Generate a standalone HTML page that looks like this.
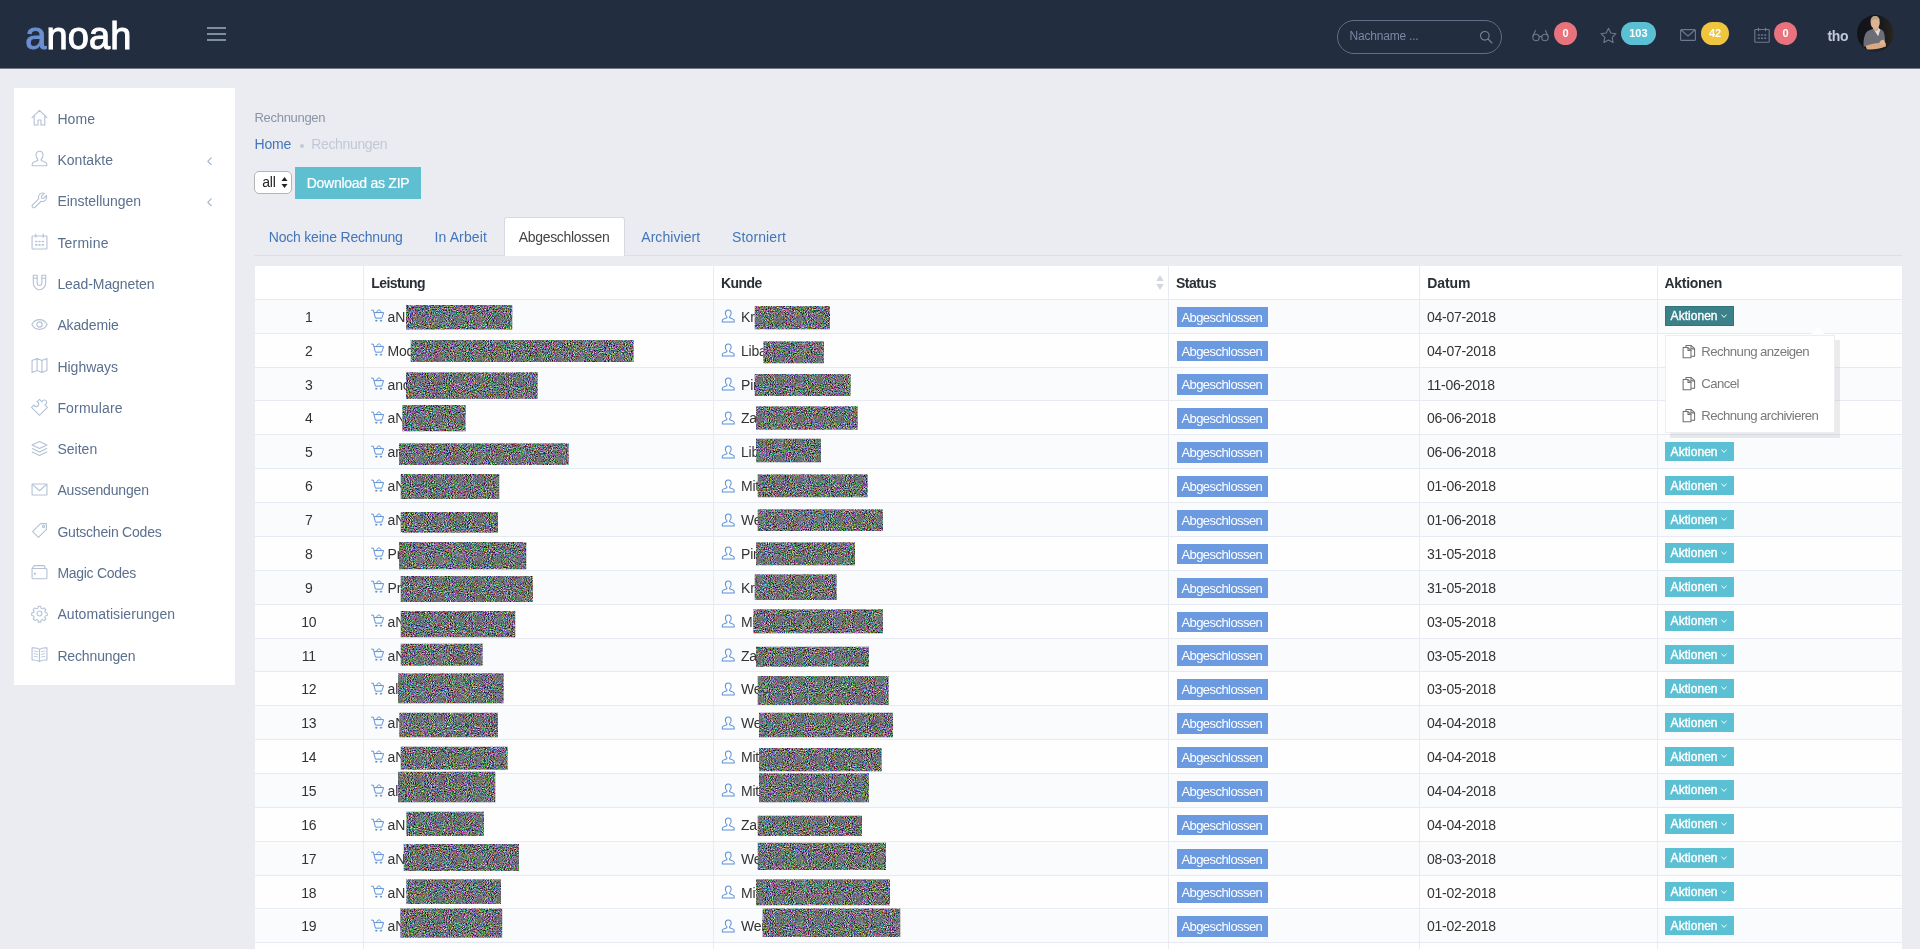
<!DOCTYPE html><html lang="de"><head><meta charset="utf-8"><title>Rechnungen</title><style>
*{box-sizing:border-box;margin:0;padding:0}
html,body{width:1920px;height:949px;overflow:hidden;background:#eaecf1;}
body{position:relative;font-family:"Liberation Sans",sans-serif;font-size:14px;color:#333;letter-spacing:-0.2px}
#root{position:absolute;left:0;top:0;width:1920px;height:949px;overflow:hidden;will-change:transform;transform:translateZ(0)}
.abs{position:absolute;white-space:nowrap}
#hdr{position:absolute;left:0;top:0;width:1920px;height:68px;background:#222d3f}
#hdr2{position:absolute;left:0;top:68px;width:1920px;height:1px;background:#727986}
#logo{position:absolute;left:25.3px;top:14.2px;font-size:38px;line-height:44px;color:#fff;letter-spacing:0.1px;-webkit-text-stroke:1px #fff}
#logo b{font-weight:normal;color:#6b8fd0;-webkit-text-stroke:1px #6b8fd0}
.bar{position:absolute;left:207px;width:19px;height:2px;background:#7f8da3}
#search{position:absolute;left:1336.5px;top:20px;width:165px;height:33.5px;border:1px solid #616d89;border-radius:17px}
#search span{position:absolute;left:12px;top:0;line-height:30px;font-size:12px;color:#7b86a4;letter-spacing:-0.2px}
.hb{position:absolute;top:22.1px;height:23.3px;border-radius:12px;color:#fff;font-size:11px;font-weight:bold;text-align:center;line-height:23px;letter-spacing:0}
#side{position:absolute;left:14px;top:88px;width:221.3px;height:597.3px;background:#fff}
.si{position:absolute;left:58px;height:20px;line-height:20px;font-size:14px;color:#5a708e;white-space:nowrap}
.sic{position:absolute;left:31px;width:17px;height:17px}
.sic svg{width:17px;height:17px;display:block;overflow:visible}
.sarr{position:absolute;left:206px;width:7px;height:8.6px}
.lnk{color:#4275ba}
#tabline{position:absolute;left:254px;top:254.7px;width:1648px;height:1px;background:#dcdfe6}
#tabact{position:absolute;left:503.8px;top:217px;width:121.2px;height:38.7px;background:#fff;border:1px solid #d6d9e0;border-bottom:none;border-radius:3px 3px 0 0}
.tab{position:absolute;top:227px;line-height:20px;font-size:14px;white-space:nowrap}
#tbl{position:absolute;left:254.5px;top:265.75px;width:1647.7px;height:700px;background:#fff}
.row{position:absolute;left:0;width:1647.7px;border-bottom:1px solid #e7ebf1}
.vl{position:absolute;top:0;width:1px;height:700px;background:#e8ebf1}
.th{position:absolute;top:0;height:33.5px;line-height:34.5px;font-weight:bold;font-size:14px;color:#2b2f36;letter-spacing:-0.55px;white-space:nowrap}
.c{position:absolute;white-space:nowrap;line-height:20px;font-size:14px;color:#333}
.badge{position:absolute;left:922.2px;width:91.3px;height:20.7px;background:#6c9ae0;color:#fff;font-size:13px;line-height:21.2px;text-align:center;letter-spacing:-0.56px;padding-right:1px}
.btn{position:absolute;left:1410.5px;width:68.7px;height:19.4px;background:#5bc0d3;color:#fff;font-size:12px;line-height:20.4px;padding-left:5.6px;letter-spacing:0.03px;-webkit-text-stroke:0.35px #fff;white-space:nowrap}
.btn.on{background:#3b8189;box-shadow:inset 0 0 0 1px #34747c}
.btn svg{position:absolute;left:56.3px;top:7.6px;width:6px;height:4.6px}
.ico{position:absolute}
#menu{position:absolute;left:1664.8px;top:334.6px;width:169.8px;height:98px;background:#fff;border:1px solid #eceef1;box-shadow:5px 5px rgba(102,102,102,0.12)}
.mi{position:absolute;left:35.5px;font-size:13.2px;color:#7a7a7a;line-height:20px;white-space:nowrap;letter-spacing:-0.56px;font-weight:normal}
.mic{position:absolute;left:16.6px;width:14px;height:15px}
</style></head><body><div id="root">
<div id="hdr2"></div><div id="hdr">
<div id="logo"><b>a</b>noah</div>
<div class="bar" style="top:27.2px"></div>
<div class="bar" style="top:32.9px"></div>
<div class="bar" style="top:38.6px"></div>
<div id="search"><span>Nachname ...</span><svg style="position:absolute;left:141.5px;top:9px;width:14px;height:14px" viewBox="0 0 14 14" fill="none" stroke="#76829f" stroke-width="1.100"><circle cx="5.800" cy="5.800" r="4.300"/><path d="M9 9l4 4" stroke-linecap="round"/></svg></div>
<svg class="abs" style="left:1532px;top:27px;width:17px;height:16px" viewBox="0 0 17 16" fill="none" stroke="#6c7991" stroke-width="1.100" stroke-linecap="round"><circle cx="4" cy="10.500" r="3.200"/><circle cx="13" cy="10.500" r="3.200"/><path d="M7.200 10c.8-.8 1.800-.8 2.600 0M1 9 3.500 3.500M16 9l-2.500-5.500"/></svg>
<svg class="abs" style="left:1600px;top:26.500px;width:17px;height:17px" viewBox="0 0 17 17" fill="none" stroke="#6c7991" stroke-width="1.100" stroke-linejoin="round"><path d="M8.500 1.200l2.300 4.800 5.200.7-3.800 3.600.9 5.200-4.600-2.500-4.600 2.500.9-5.200L1 6.700 6.200 6z"/></svg>
<svg class="abs" style="left:1679.500px;top:28.500px;width:16px;height:12px" viewBox="0 0 16 12" fill="none" stroke="#6c7991" stroke-width="1.100" stroke-linejoin="round"><rect x=".6" y=".6" width="14.800" height="10.800" rx="1"/><path d="M1 1l7 6 7-6"/></svg>
<svg class="abs" style="left:1753.500px;top:27px;width:16px;height:16px" viewBox="0 0 16 16" fill="none" stroke="#6c7991" stroke-width="1.100" stroke-linecap="round"><rect x=".8" y="2.500" width="14.400" height="12.700" rx=".8"/><path d="M4.500 1v2.800M11.500 1v2.800"/><path d="M4.300 8h1M7.500 8h1M10.700 8h1M4.300 11.300h1M7.500 11.300h1M10.700 11.300h1" stroke-width="1.400"/></svg>
<div class="hb" style="left:1553.800px;width:23.300px;background:#e8737c">0</div>
<div class="hb" style="left:1620.600px;width:35.600px;background:#5bc0d3">103</div>
<div class="hb" style="left:1700.700px;width:28.700px;background:#eec53d">42</div>
<div class="hb" style="left:1774px;width:23.300px;background:#e8737c">0</div>
<div class="abs" style="left:1827.5px;top:25.7px;line-height:20px;font-size:14px;font-weight:bold;color:#c3c9da;letter-spacing:-0.3px">tho</div>
<svg class="abs" style="left:1857.200px;top:15px;width:36.600px;height:36.600px" viewBox="0 0 36 36"><defs><clipPath id="av"><circle cx="18" cy="18" r="18"/></clipPath><linearGradient id="avg" x1="0" y1="0" x2="1" y2="0"><stop offset="0" stop-color="#111317"/><stop offset=".6" stop-color="#17171a"/><stop offset="1" stop-color="#2a261f"/></linearGradient></defs><g clip-path="url(#av)"><rect width="36" height="36" fill="url(#avg)"/><rect y="33.500" width="36" height="3" fill="#1c2535"/><path d="M6.500 31C6 24 7.500 17.500 11 15.500l5-2 7 .3c2.500.8 3.800 3.200 4.200 6.500l.8 10.700z" fill="#6d6d78"/><path d="M16.300 12.500h5.200l1.300 2.300-2 6.200-3.500-5.500z" fill="#e3ddd6"/><path d="M15.800 10h5.300v4.500l-1.800 1.500-3.500-2z" fill="#d1a584"/><ellipse cx="17.900" cy="7.300" rx="4.500" ry="6.300" fill="#dcb494"/><path d="M13.400 6.500C13.300 2.500 15.500.8 18 .9c2.400.1 4.300 1.600 4.400 4.600-1.500-1.700-6.500-2-9 1z" fill="#b9a486"/><path d="M8.500 30.500c4-2 12-3.500 19.500-3.200l.6 3.500c-6 2.500-14 3.700-19 3z" fill="#d8a982"/><path d="M22 27c1-2 3-3 4.500-2.500l1.500 4-4 1z" fill="#e0b790"/></g></svg>
</div>
<div id="side">
<div class="sic" style="left:17px;top:21.10px"><svg viewBox="0 0 16 16" fill="none" stroke="#b4c2d5" stroke-width="1.05" stroke-linecap="round" stroke-linejoin="round" ><path d="M1 8.2 8 1.2l7 7M3 6.6V15h3.6v-4.6h2.8V15H13V6.6"/></svg></div>
<div class="si" style="left:43.4px;top:20.70px;letter-spacing:0.07px">Home</div>
<div class="sic" style="left:17px;top:62.40px"><svg viewBox="0 0 16 16" fill="none" stroke="#b4c2d5" stroke-width="1.05" stroke-linecap="round" stroke-linejoin="round" ><path d="M8 1.2c2 0 3.3 1.5 3.3 3.7 0 1.6-.7 3-1.7 3.8v1.2l4 1.7c.7.3 1.2 1 1.2 1.800v1.4H1.200v-1.400c0-.8.500-1.500 1.200-1.800l4-1.700V8.700C5.400 7.900 4.700 6.500 4.700 4.900 4.700 2.700 6 1.200 8 1.200z"/></svg></div>
<div class="si" style="left:43.4px;top:62.00px;letter-spacing:0.04px">Kontakte</div>
<svg class="sarr" style="left:191.6px;top:68.50px" viewBox="0 0 8 10" fill="none" stroke="#a3b2c7" stroke-width="1.300" stroke-linecap="round" stroke-linejoin="round"><path d="M6 1 2 5l4 4"/></svg>
<div class="sic" style="left:17px;top:103.70px"><svg viewBox="0 0 16 16" fill="none" stroke="#b4c2d5" stroke-width="1.05" stroke-linecap="round" stroke-linejoin="round" ><path d="M14.600 3.300 12 5.900l-2-.1-.1-2 2.600-2.600c-1.600-.5-3.300-.100-4.400 1.100-1.100 1.100-1.400 2.700-.900 4.100L1.500 12.200c-.6.600-.6 1.600 0 2.200s1.600.6 2.200 0l5.800-5.700c1.400.500 3 .2 4.100-.9 1.200-1.200 1.500-2.900 1-4.500z"/></svg></div>
<div class="si" style="left:43.4px;top:103.30px;letter-spacing:-0.04px">Einstellungen</div>
<svg class="sarr" style="left:191.6px;top:109.80px" viewBox="0 0 8 10" fill="none" stroke="#a3b2c7" stroke-width="1.300" stroke-linecap="round" stroke-linejoin="round"><path d="M6 1 2 5l4 4"/></svg>
<div class="sic" style="left:17px;top:145.00px"><svg viewBox="0 0 16 16" fill="none" stroke="#b4c2d5" stroke-width="1.05" stroke-linecap="round" stroke-linejoin="round" ><rect x="1" y="2.800" width="14" height="12.200" rx=".6"/><path d="M4.500 1v3M11.500 1v3"/><path d="M4.500 8h.9M7.600 8h.9M10.700 8h.9M4.500 11.200h.9M7.600 11.200h.9M10.700 11.200h.9" stroke-width="1.500"/></svg></div>
<div class="si" style="left:43.4px;top:144.60px;letter-spacing:0.21px">Termine</div>
<div class="sic" style="left:17px;top:186.30px"><svg viewBox="0 0 16 16" fill="none" stroke="#b4c2d5" stroke-width="1.05" stroke-linecap="round" stroke-linejoin="round" ><path d="M2.200 1.200h3.600v7.300c0 1.300 1 2.300 2.200 2.300s2.200-1 2.200-2.300V1.200h3.600v7.300c0 3.300-2.600 6.300-5.800 6.300s-5.800-3-5.800-6.300z"/><path d="M2.200 4h3.600M10.200 4h3.600"/></svg></div>
<div class="si" style="left:43.4px;top:185.90px;letter-spacing:-0.08px">Lead-Magneten</div>
<div class="sic" style="left:17px;top:227.60px"><svg viewBox="0 0 16 16" fill="none" stroke="#b4c2d5" stroke-width="1.05" stroke-linecap="round" stroke-linejoin="round" ><path d="M.8 8C2.300 5.200 5 3.400 8 3.400s5.700 1.800 7.200 4.600C13.700 10.800 11 12.600 8 12.600S2.300 10.800.8 8z"/><circle cx="8" cy="8" r="2.500"/></svg></div>
<div class="si" style="left:43.4px;top:227.20px;letter-spacing:-0.13px">Akademie</div>
<div class="sic" style="left:17px;top:268.90px"><svg viewBox="0 0 16 16" fill="none" stroke="#b4c2d5" stroke-width="1.05" stroke-linecap="round" stroke-linejoin="round" ><path d="M1 3.200 5.700 1.400l4.600 1.800L15 1.400v11.400l-4.700 1.800-4.600-1.800L1 14.600zM5.700 1.400v11.400M10.300 3.200v11.400"/></svg></div>
<div class="si" style="left:43.4px;top:268.50px;letter-spacing:0.0px">Highways</div>
<div class="sic" style="left:17px;top:310.20px"><svg viewBox="0 0 16 16" fill="none" stroke="#b4c2d5" stroke-width="1.05" stroke-linecap="round" stroke-linejoin="round" ><g transform="translate(0 .4) scale(.96)"><path d="M.5 8.700 2.950 6.250A2.380 2.380 0 1 0 5.850 3.350L8.300.9 10.750 3.350A2.380 2.380 0 1 1 13.650 6.250L16.100 8.700 8.300 16.500z"/></g></svg></div>
<div class="si" style="left:43.4px;top:309.80px;letter-spacing:0.17px">Formulare</div>
<div class="sic" style="left:17px;top:351.50px"><svg viewBox="0 0 16 16" fill="none" stroke="#b4c2d5" stroke-width="1.05" stroke-linecap="round" stroke-linejoin="round" ><path d="M8 1.300 15 4.700 8 8.100 1 4.700zM1.200 8 8 11.300 14.800 8M1.200 11.200 8 14.500l6.800-3.300"/></svg></div>
<div class="si" style="left:43.4px;top:351.10px;letter-spacing:0.02px">Seiten</div>
<div class="sic" style="left:17px;top:392.80px"><svg viewBox="0 0 16 16" fill="none" stroke="#b4c2d5" stroke-width="1.05" stroke-linecap="round" stroke-linejoin="round" ><rect x="1" y="2.800" width="14" height="10.400" rx=".6"/><path d="M1.300 3.200 8 9.200l6.700-6"/></svg></div>
<div class="si" style="left:43.4px;top:392.40px;letter-spacing:-0.17px">Aussendungen</div>
<div class="sic" style="left:17px;top:434.10px"><svg viewBox="0 0 16 16" fill="none" stroke="#b4c2d5" stroke-width="1.05" stroke-linecap="round" stroke-linejoin="round" ><path d="M9 1.500h5.500V7L7 14.500 1.500 9z"/><circle cx="11.800" cy="4.200" r="1"/></svg></div>
<div class="si" style="left:43.4px;top:433.70px;letter-spacing:-0.22px">Gutschein Codes</div>
<div class="sic" style="left:17px;top:475.40px"><svg viewBox="0 0 16 16" fill="none" stroke="#b4c2d5" stroke-width="1.05" stroke-linecap="round" stroke-linejoin="round" ><path d="M1 5.200h13c.6 0 1 .4 1 1v7.600c0 .6-.4 1-1 1H2c-.6 0-1-.4-1-1zM1 5.200 3 2.500h9.500l1 2.700"/><circle cx="3.600" cy="10" r=".5"/></svg></div>
<div class="si" style="left:43.4px;top:475.00px;letter-spacing:-0.28px">Magic Codes</div>
<div class="sic" style="left:17px;top:516.70px"><svg viewBox="0 0 16 16" fill="none" stroke="#b4c2d5" stroke-width="1.05" stroke-linecap="round" stroke-linejoin="round" ><circle cx="8" cy="8" r="2.300"/><path d="M6.800 1h2.400l.4 1.900 1.300.6 1.700-1 1.600 1.700-1 1.600.5 1.300 1.900.5v2.300l-1.900.5-.5 1.300 1 1.600-1.600 1.700-1.700-1-1.300.5-.4 2H6.800l-.4-2-1.300-.5-1.700 1-1.600-1.700 1-1.600-.5-1.300L.4 9.900V7.600l1.900-.5.5-1.300-1-1.600 1.600-1.700 1.700 1 1.300-.6z" transform="translate(.3 .3) scale(.96)"/></svg></div>
<div class="si" style="left:43.4px;top:516.30px;letter-spacing:0.06px">Automatisierungen</div>
<div class="sic" style="left:17px;top:558.00px"><svg viewBox="0 0 16 16" fill="none" stroke="#b4c2d5" stroke-width="1.05" stroke-linecap="round" stroke-linejoin="round" ><path d="M8 3.200C6.500 2 4 1.600 1 1.800v11.400c3-.2 5.500.2 7 1.400 1.500-1.200 4-1.600 7-1.400V1.800C12 1.600 9.500 2 8 3.200zM8 3.200v11.400"/><path d="M3 4.800c1.200 0 2.300.2 3.200.6M3 7.300c1.200 0 2.300.2 3.200.6M3 9.800c1.200 0 2.300.2 3.200.6M13 4.800c-1.200 0-2.300.2-3.200.6M13 7.300c-1.200 0-2.300.2-3.200.6M13 9.800c-1.200 0-2.300.2-3.200.6" stroke-width=".8"/></svg></div>
<div class="si" style="left:43.4px;top:557.60px;letter-spacing:-0.14px">Rechnungen</div>
</div>
<div class="abs" style="left:254.500px;top:109.400px;line-height:18px;font-size:13px;color:#8a95a6;letter-spacing:-0.3px">Rechnungen</div>
<div class="abs lnk" style="left:254.500px;top:133.800px;line-height:20px;font-size:14px">Home</div>
<div class="abs" style="left:300px;top:144px;width:4px;height:4px;border-radius:2px;background:#c3cbd9"></div>
<div class="abs" style="left:311.200px;top:133.800px;line-height:20px;font-size:14px;letter-spacing:-0.34px;color:#c1c9d7">Rechnungen</div>
<div class="abs" style="left:254.250px;top:171.250px;width:37.250px;height:22.250px;background:#fff;border:1px solid #b4b4b4;border-radius:5px"><span style="position:absolute;left:7px;top:0;line-height:21.500px;font-size:14px;color:#222">all</span><svg style="position:absolute;left:25.500px;top:4.500px;width:7px;height:11px" viewBox="0 0 7 11" fill="#222"><path d="M3.500 0 6.500 4h-6zM3.500 11 .5 7h6z"/></svg></div>
<div class="abs" style="left:295.250px;top:167.250px;width:125.600px;height:31.750px;background:#5dbfd0;color:#fff;font-size:14px;line-height:33px;text-align:center;letter-spacing:-0.27px;-webkit-text-stroke:0.2px #fff">Download as ZIP</div>
<div id="tabline"></div><div id="tabact"></div>
<div class="tab lnk" style="left:268.75px;letter-spacing:-0.2px">Noch keine Rechnung</div>
<div class="tab lnk" style="left:434.5px;letter-spacing:0.12px">In Arbeit</div>
<div class="tab" style="left:518.75px;color:#444;letter-spacing:-0.33px">Abgeschlossen</div>
<div class="tab lnk" style="left:641.25px;letter-spacing:0.06px">Archiviert</div>
<div class="tab lnk" style="left:732.1px;letter-spacing:0.1px">Storniert</div>
<div id="tbl">
<div class="row" style="top:0;height:34.1px;background:#fff"></div>
<div class="row" style="top:34.10px;height:33.87px;background:#fafbfd"></div>
<div class="row" style="top:67.97px;height:33.87px;background:#fefefe"></div>
<div class="row" style="top:101.84px;height:33.87px;background:#fafbfd"></div>
<div class="row" style="top:135.71px;height:33.87px;background:#fefefe"></div>
<div class="row" style="top:169.58px;height:33.87px;background:#fafbfd"></div>
<div class="row" style="top:203.45px;height:33.87px;background:#fefefe"></div>
<div class="row" style="top:237.32px;height:33.87px;background:#fafbfd"></div>
<div class="row" style="top:271.19px;height:33.87px;background:#fefefe"></div>
<div class="row" style="top:305.06px;height:33.87px;background:#fafbfd"></div>
<div class="row" style="top:338.93px;height:33.87px;background:#fefefe"></div>
<div class="row" style="top:372.80px;height:33.87px;background:#fafbfd"></div>
<div class="row" style="top:406.67px;height:33.87px;background:#fefefe"></div>
<div class="row" style="top:440.54px;height:33.87px;background:#fafbfd"></div>
<div class="row" style="top:474.41px;height:33.87px;background:#fefefe"></div>
<div class="row" style="top:508.28px;height:33.87px;background:#fafbfd"></div>
<div class="row" style="top:542.15px;height:33.87px;background:#fefefe"></div>
<div class="row" style="top:576.02px;height:33.87px;background:#fafbfd"></div>
<div class="row" style="top:609.89px;height:33.87px;background:#fefefe"></div>
<div class="row" style="top:643.76px;height:33.87px;background:#fafbfd"></div>
<div class="row" style="top:677.63px;height:33.87px;background:#fefefe"></div>
<div class="vl" style="left:108.25px"></div>
<div class="vl" style="left:458.70px"></div>
<div class="vl" style="left:913.70px"></div>
<div class="vl" style="left:1164.30px"></div>
<div class="vl" style="left:1402.30px"></div>
<div class="th" style="left:116.70px;letter-spacing:-0.55px">Leistung</div>
<div class="th" style="left:466.40px;letter-spacing:-0.55px">Kunde</div>
<div class="th" style="left:921.40px;letter-spacing:-0.45px">Status</div>
<div class="th" style="left:1172.80px;letter-spacing:-0.08px">Datum</div>
<div class="th" style="left:1410.00px;letter-spacing:-0.3px">Aktionen</div>
<svg class="abs" style="left:901.20px;top:9.25px;width:8px;height:15px" viewBox="0 0 8 15" fill="#d3d7de"><path d="M4 0 7.800 6H.2zM4 15 .2 9h7.600z"/></svg>
<div class="c" style="left:24.25px;width:60px;text-align:center;top:41.08px">1</div>
<svg class="ico" style="left:116.40px;top:43.73px;width:13.500px;height:13.500px" viewBox="0 0 14 14" fill="none" stroke="#5a8fd6" stroke-width="1" stroke-linecap="round" stroke-linejoin="round"><path d="M.6 1.200h1.800l2.200 8.300h6.600l1.900-5.800H3.600"/><path d="M6 3.600c0-1.700 1-2.600 2.200-2.600s2.200.9 2.200 2.600"/><circle cx="5.400" cy="12.100" r=".75" fill="#5a8fd6" stroke-width=".6"/><circle cx="10.300" cy="12.100" r=".75" fill="#5a8fd6" stroke-width=".6"/></svg>
<div class="c" style="left:133.05px;top:41.08px">aN</div>
<svg class="ico" style="left:466.60px;top:43.53px;width:14.500px;height:14px" viewBox="0 0 16 16" fill="none" stroke="#5a8fd6" stroke-width="1.150" stroke-linecap="round" stroke-linejoin="round"><path d="M8 1.2c2 0 3.3 1.5 3.3 3.7 0 1.6-.7 3-1.7 3.8v1.2l4 1.7c.7.3 1.2 1 1.2 1.800v1.4H1.200v-1.400c0-.8.500-1.500 1.200-1.800l4-1.700V8.700C5.400 7.900 4.700 6.500 4.700 4.900 4.700 2.700 6 1.200 8 1.200z"/></svg>
<div class="c" style="left:486.50px;top:41.08px">Kr</div>
<div class="badge" style="top:40.93px">Abgeschlossen</div>
<div class="c" style="left:1172.60px;top:41.08px;letter-spacing:-0.3px">04-07-2018</div>
<div class="btn on" style="top:40.53px">Aktionen<svg viewBox="0 0 7 5" fill="none" stroke="#fff" stroke-width="1.100" stroke-linecap="round" stroke-linejoin="round"><path d="M.8.800 3.500 3.800 6.200.8"/></svg></div>
<div class="c" style="left:24.25px;width:60px;text-align:center;top:74.95px">2</div>
<svg class="ico" style="left:116.40px;top:77.61px;width:13.500px;height:13.500px" viewBox="0 0 14 14" fill="none" stroke="#5a8fd6" stroke-width="1" stroke-linecap="round" stroke-linejoin="round"><path d="M.6 1.200h1.800l2.200 8.300h6.600l1.900-5.800H3.600"/><path d="M6 3.600c0-1.700 1-2.600 2.200-2.600s2.200.9 2.200 2.600"/><circle cx="5.400" cy="12.100" r=".75" fill="#5a8fd6" stroke-width=".6"/><circle cx="10.300" cy="12.100" r=".75" fill="#5a8fd6" stroke-width=".6"/></svg>
<div class="c" style="left:133.05px;top:74.95px">Mod</div>
<svg class="ico" style="left:466.60px;top:77.41px;width:14.500px;height:14px" viewBox="0 0 16 16" fill="none" stroke="#5a8fd6" stroke-width="1.150" stroke-linecap="round" stroke-linejoin="round"><path d="M8 1.2c2 0 3.3 1.5 3.3 3.7 0 1.6-.7 3-1.7 3.8v1.2l4 1.7c.7.3 1.2 1 1.2 1.800v1.4H1.200v-1.400c0-.8.500-1.500 1.200-1.800l4-1.700V8.700C5.400 7.900 4.700 6.500 4.700 4.900 4.700 2.700 6 1.200 8 1.200z"/></svg>
<div class="c" style="left:486.50px;top:74.95px">Liba</div>
<div class="badge" style="top:74.81px">Abgeschlossen</div>
<div class="c" style="left:1172.60px;top:74.95px;letter-spacing:-0.3px">04-07-2018</div>
<div class="c" style="left:24.25px;width:60px;text-align:center;top:108.83px">3</div>
<svg class="ico" style="left:116.40px;top:111.48px;width:13.500px;height:13.500px" viewBox="0 0 14 14" fill="none" stroke="#5a8fd6" stroke-width="1" stroke-linecap="round" stroke-linejoin="round"><path d="M.6 1.200h1.800l2.200 8.300h6.600l1.900-5.800H3.600"/><path d="M6 3.600c0-1.700 1-2.600 2.200-2.600s2.200.9 2.200 2.600"/><circle cx="5.400" cy="12.100" r=".75" fill="#5a8fd6" stroke-width=".6"/><circle cx="10.300" cy="12.100" r=".75" fill="#5a8fd6" stroke-width=".6"/></svg>
<div class="c" style="left:133.05px;top:108.83px">ano</div>
<svg class="ico" style="left:466.60px;top:111.28px;width:14.500px;height:14px" viewBox="0 0 16 16" fill="none" stroke="#5a8fd6" stroke-width="1.150" stroke-linecap="round" stroke-linejoin="round"><path d="M8 1.2c2 0 3.3 1.5 3.3 3.7 0 1.6-.7 3-1.7 3.8v1.2l4 1.7c.7.3 1.2 1 1.2 1.800v1.4H1.200v-1.400c0-.8.500-1.500 1.200-1.800l4-1.700V8.700C5.400 7.900 4.700 6.500 4.700 4.900 4.700 2.700 6 1.200 8 1.200z"/></svg>
<div class="c" style="left:486.50px;top:108.83px">Pin</div>
<div class="badge" style="top:108.68px">Abgeschlossen</div>
<div class="c" style="left:1172.60px;top:108.83px;letter-spacing:-0.3px">11-06-2018</div>
<div class="c" style="left:24.25px;width:60px;text-align:center;top:142.69px">4</div>
<svg class="ico" style="left:116.40px;top:145.34px;width:13.500px;height:13.500px" viewBox="0 0 14 14" fill="none" stroke="#5a8fd6" stroke-width="1" stroke-linecap="round" stroke-linejoin="round"><path d="M.6 1.200h1.800l2.200 8.300h6.600l1.900-5.800H3.600"/><path d="M6 3.600c0-1.700 1-2.600 2.200-2.600s2.200.9 2.200 2.600"/><circle cx="5.400" cy="12.100" r=".75" fill="#5a8fd6" stroke-width=".6"/><circle cx="10.300" cy="12.100" r=".75" fill="#5a8fd6" stroke-width=".6"/></svg>
<div class="c" style="left:133.05px;top:142.69px">aN</div>
<svg class="ico" style="left:466.60px;top:145.14px;width:14.500px;height:14px" viewBox="0 0 16 16" fill="none" stroke="#5a8fd6" stroke-width="1.150" stroke-linecap="round" stroke-linejoin="round"><path d="M8 1.2c2 0 3.3 1.5 3.3 3.7 0 1.6-.7 3-1.7 3.8v1.2l4 1.7c.7.3 1.2 1 1.2 1.800v1.4H1.200v-1.400c0-.8.500-1.500 1.200-1.800l4-1.700V8.700C5.400 7.900 4.700 6.500 4.700 4.900 4.700 2.700 6 1.200 8 1.200z"/></svg>
<div class="c" style="left:486.50px;top:142.69px">Za</div>
<div class="badge" style="top:142.54px">Abgeschlossen</div>
<div class="c" style="left:1172.60px;top:142.69px;letter-spacing:-0.3px">06-06-2018</div>
<div class="c" style="left:24.25px;width:60px;text-align:center;top:176.56px">5</div>
<svg class="ico" style="left:116.40px;top:179.21px;width:13.500px;height:13.500px" viewBox="0 0 14 14" fill="none" stroke="#5a8fd6" stroke-width="1" stroke-linecap="round" stroke-linejoin="round"><path d="M.6 1.200h1.800l2.200 8.300h6.600l1.900-5.800H3.600"/><path d="M6 3.600c0-1.700 1-2.600 2.200-2.600s2.200.9 2.200 2.600"/><circle cx="5.400" cy="12.100" r=".75" fill="#5a8fd6" stroke-width=".6"/><circle cx="10.300" cy="12.100" r=".75" fill="#5a8fd6" stroke-width=".6"/></svg>
<div class="c" style="left:133.05px;top:176.56px">an</div>
<svg class="ico" style="left:466.60px;top:179.01px;width:14.500px;height:14px" viewBox="0 0 16 16" fill="none" stroke="#5a8fd6" stroke-width="1.150" stroke-linecap="round" stroke-linejoin="round"><path d="M8 1.2c2 0 3.3 1.5 3.3 3.7 0 1.6-.7 3-1.7 3.8v1.2l4 1.7c.7.3 1.2 1 1.2 1.800v1.4H1.200v-1.400c0-.8.500-1.500 1.200-1.800l4-1.700V8.700C5.400 7.900 4.700 6.500 4.700 4.900 4.700 2.700 6 1.200 8 1.200z"/></svg>
<div class="c" style="left:486.50px;top:176.56px">Lib</div>
<div class="badge" style="top:176.41px">Abgeschlossen</div>
<div class="c" style="left:1172.60px;top:176.56px;letter-spacing:-0.3px">06-06-2018</div>
<div class="btn" style="top:176.01px">Aktionen<svg viewBox="0 0 7 5" fill="none" stroke="#fff" stroke-width="1.100" stroke-linecap="round" stroke-linejoin="round"><path d="M.8.800 3.500 3.800 6.200.8"/></svg></div>
<div class="c" style="left:24.25px;width:60px;text-align:center;top:210.44px">6</div>
<svg class="ico" style="left:116.40px;top:213.08px;width:13.500px;height:13.500px" viewBox="0 0 14 14" fill="none" stroke="#5a8fd6" stroke-width="1" stroke-linecap="round" stroke-linejoin="round"><path d="M.6 1.200h1.800l2.200 8.300h6.600l1.900-5.800H3.600"/><path d="M6 3.600c0-1.700 1-2.600 2.200-2.600s2.200.9 2.200 2.600"/><circle cx="5.400" cy="12.100" r=".75" fill="#5a8fd6" stroke-width=".6"/><circle cx="10.300" cy="12.100" r=".75" fill="#5a8fd6" stroke-width=".6"/></svg>
<div class="c" style="left:133.05px;top:210.44px">aN</div>
<svg class="ico" style="left:466.60px;top:212.88px;width:14.500px;height:14px" viewBox="0 0 16 16" fill="none" stroke="#5a8fd6" stroke-width="1.150" stroke-linecap="round" stroke-linejoin="round"><path d="M8 1.2c2 0 3.3 1.5 3.3 3.7 0 1.6-.7 3-1.7 3.8v1.2l4 1.7c.7.3 1.2 1 1.2 1.800v1.4H1.200v-1.400c0-.8.500-1.500 1.200-1.800l4-1.700V8.700C5.400 7.900 4.700 6.500 4.700 4.900 4.700 2.700 6 1.200 8 1.200z"/></svg>
<div class="c" style="left:486.50px;top:210.44px">Mit</div>
<div class="badge" style="top:210.28px">Abgeschlossen</div>
<div class="c" style="left:1172.60px;top:210.44px;letter-spacing:-0.3px">01-06-2018</div>
<div class="btn" style="top:209.88px">Aktionen<svg viewBox="0 0 7 5" fill="none" stroke="#fff" stroke-width="1.100" stroke-linecap="round" stroke-linejoin="round"><path d="M.8.800 3.500 3.800 6.200.8"/></svg></div>
<div class="c" style="left:24.25px;width:60px;text-align:center;top:244.30px">7</div>
<svg class="ico" style="left:116.40px;top:246.95px;width:13.500px;height:13.500px" viewBox="0 0 14 14" fill="none" stroke="#5a8fd6" stroke-width="1" stroke-linecap="round" stroke-linejoin="round"><path d="M.6 1.200h1.800l2.200 8.300h6.600l1.900-5.800H3.600"/><path d="M6 3.600c0-1.700 1-2.600 2.200-2.600s2.200.9 2.200 2.600"/><circle cx="5.400" cy="12.100" r=".75" fill="#5a8fd6" stroke-width=".6"/><circle cx="10.300" cy="12.100" r=".75" fill="#5a8fd6" stroke-width=".6"/></svg>
<div class="c" style="left:133.05px;top:244.30px">aN</div>
<svg class="ico" style="left:466.60px;top:246.75px;width:14.500px;height:14px" viewBox="0 0 16 16" fill="none" stroke="#5a8fd6" stroke-width="1.150" stroke-linecap="round" stroke-linejoin="round"><path d="M8 1.2c2 0 3.3 1.5 3.3 3.7 0 1.6-.7 3-1.7 3.8v1.2l4 1.7c.7.3 1.2 1 1.2 1.800v1.4H1.200v-1.400c0-.8.500-1.500 1.200-1.800l4-1.700V8.700C5.400 7.900 4.700 6.500 4.700 4.900 4.700 2.700 6 1.200 8 1.200z"/></svg>
<div class="c" style="left:486.50px;top:244.30px">We</div>
<div class="badge" style="top:244.15px">Abgeschlossen</div>
<div class="c" style="left:1172.60px;top:244.30px;letter-spacing:-0.3px">01-06-2018</div>
<div class="btn" style="top:243.75px">Aktionen<svg viewBox="0 0 7 5" fill="none" stroke="#fff" stroke-width="1.100" stroke-linecap="round" stroke-linejoin="round"><path d="M.8.800 3.500 3.800 6.200.8"/></svg></div>
<div class="c" style="left:24.25px;width:60px;text-align:center;top:278.18px">8</div>
<svg class="ico" style="left:116.40px;top:280.82px;width:13.500px;height:13.500px" viewBox="0 0 14 14" fill="none" stroke="#5a8fd6" stroke-width="1" stroke-linecap="round" stroke-linejoin="round"><path d="M.6 1.200h1.800l2.200 8.300h6.600l1.900-5.800H3.600"/><path d="M6 3.600c0-1.700 1-2.600 2.200-2.600s2.200.9 2.200 2.600"/><circle cx="5.400" cy="12.100" r=".75" fill="#5a8fd6" stroke-width=".6"/><circle cx="10.300" cy="12.100" r=".75" fill="#5a8fd6" stroke-width=".6"/></svg>
<div class="c" style="left:133.05px;top:278.18px">Pr</div>
<svg class="ico" style="left:466.60px;top:280.62px;width:14.500px;height:14px" viewBox="0 0 16 16" fill="none" stroke="#5a8fd6" stroke-width="1.150" stroke-linecap="round" stroke-linejoin="round"><path d="M8 1.2c2 0 3.3 1.5 3.3 3.7 0 1.6-.7 3-1.7 3.8v1.2l4 1.7c.7.3 1.2 1 1.2 1.800v1.4H1.200v-1.400c0-.8.500-1.500 1.200-1.800l4-1.700V8.700C5.400 7.900 4.700 6.500 4.700 4.900 4.700 2.700 6 1.200 8 1.200z"/></svg>
<div class="c" style="left:486.50px;top:278.18px">Pin</div>
<div class="badge" style="top:278.02px">Abgeschlossen</div>
<div class="c" style="left:1172.60px;top:278.18px;letter-spacing:-0.3px">31-05-2018</div>
<div class="btn" style="top:277.62px">Aktionen<svg viewBox="0 0 7 5" fill="none" stroke="#fff" stroke-width="1.100" stroke-linecap="round" stroke-linejoin="round"><path d="M.8.800 3.500 3.800 6.200.8"/></svg></div>
<div class="c" style="left:24.25px;width:60px;text-align:center;top:312.05px">9</div>
<svg class="ico" style="left:116.40px;top:314.69px;width:13.500px;height:13.500px" viewBox="0 0 14 14" fill="none" stroke="#5a8fd6" stroke-width="1" stroke-linecap="round" stroke-linejoin="round"><path d="M.6 1.200h1.800l2.200 8.300h6.600l1.900-5.800H3.600"/><path d="M6 3.600c0-1.700 1-2.600 2.200-2.600s2.200.9 2.200 2.600"/><circle cx="5.400" cy="12.100" r=".75" fill="#5a8fd6" stroke-width=".6"/><circle cx="10.300" cy="12.100" r=".75" fill="#5a8fd6" stroke-width=".6"/></svg>
<div class="c" style="left:133.05px;top:312.05px">Pr</div>
<svg class="ico" style="left:466.60px;top:314.50px;width:14.500px;height:14px" viewBox="0 0 16 16" fill="none" stroke="#5a8fd6" stroke-width="1.150" stroke-linecap="round" stroke-linejoin="round"><path d="M8 1.2c2 0 3.3 1.5 3.3 3.7 0 1.6-.7 3-1.7 3.8v1.2l4 1.7c.7.3 1.2 1 1.2 1.800v1.4H1.200v-1.400c0-.8.500-1.500 1.200-1.800l4-1.700V8.700C5.400 7.900 4.700 6.500 4.700 4.900 4.700 2.700 6 1.200 8 1.200z"/></svg>
<div class="c" style="left:486.50px;top:312.05px">Kr</div>
<div class="badge" style="top:311.89px">Abgeschlossen</div>
<div class="c" style="left:1172.60px;top:312.05px;letter-spacing:-0.3px">31-05-2018</div>
<div class="btn" style="top:311.50px">Aktionen<svg viewBox="0 0 7 5" fill="none" stroke="#fff" stroke-width="1.100" stroke-linecap="round" stroke-linejoin="round"><path d="M.8.800 3.500 3.800 6.200.8"/></svg></div>
<div class="c" style="left:24.25px;width:60px;text-align:center;top:345.92px">10</div>
<svg class="ico" style="left:116.40px;top:348.56px;width:13.500px;height:13.500px" viewBox="0 0 14 14" fill="none" stroke="#5a8fd6" stroke-width="1" stroke-linecap="round" stroke-linejoin="round"><path d="M.6 1.200h1.800l2.200 8.300h6.600l1.900-5.800H3.600"/><path d="M6 3.600c0-1.700 1-2.600 2.200-2.600s2.200.9 2.200 2.600"/><circle cx="5.400" cy="12.100" r=".75" fill="#5a8fd6" stroke-width=".6"/><circle cx="10.300" cy="12.100" r=".75" fill="#5a8fd6" stroke-width=".6"/></svg>
<div class="c" style="left:133.05px;top:345.92px">aN</div>
<svg class="ico" style="left:466.60px;top:348.37px;width:14.500px;height:14px" viewBox="0 0 16 16" fill="none" stroke="#5a8fd6" stroke-width="1.150" stroke-linecap="round" stroke-linejoin="round"><path d="M8 1.2c2 0 3.3 1.5 3.3 3.7 0 1.6-.7 3-1.7 3.8v1.2l4 1.7c.7.3 1.2 1 1.2 1.800v1.4H1.200v-1.400c0-.8.500-1.500 1.200-1.800l4-1.700V8.700C5.400 7.900 4.700 6.500 4.700 4.900 4.700 2.700 6 1.200 8 1.200z"/></svg>
<div class="c" style="left:486.50px;top:345.92px">Mit</div>
<div class="badge" style="top:345.76px">Abgeschlossen</div>
<div class="c" style="left:1172.60px;top:345.92px;letter-spacing:-0.3px">03-05-2018</div>
<div class="btn" style="top:345.37px">Aktionen<svg viewBox="0 0 7 5" fill="none" stroke="#fff" stroke-width="1.100" stroke-linecap="round" stroke-linejoin="round"><path d="M.8.800 3.500 3.800 6.200.8"/></svg></div>
<div class="c" style="left:24.25px;width:60px;text-align:center;top:379.79px">11</div>
<svg class="ico" style="left:116.40px;top:382.44px;width:13.500px;height:13.500px" viewBox="0 0 14 14" fill="none" stroke="#5a8fd6" stroke-width="1" stroke-linecap="round" stroke-linejoin="round"><path d="M.6 1.200h1.800l2.200 8.300h6.600l1.900-5.800H3.600"/><path d="M6 3.600c0-1.700 1-2.600 2.200-2.600s2.200.9 2.200 2.600"/><circle cx="5.400" cy="12.100" r=".75" fill="#5a8fd6" stroke-width=".6"/><circle cx="10.300" cy="12.100" r=".75" fill="#5a8fd6" stroke-width=".6"/></svg>
<div class="c" style="left:133.05px;top:379.79px">aN</div>
<svg class="ico" style="left:466.60px;top:382.24px;width:14.500px;height:14px" viewBox="0 0 16 16" fill="none" stroke="#5a8fd6" stroke-width="1.150" stroke-linecap="round" stroke-linejoin="round"><path d="M8 1.2c2 0 3.3 1.5 3.3 3.7 0 1.6-.7 3-1.7 3.8v1.2l4 1.7c.7.3 1.2 1 1.2 1.800v1.4H1.200v-1.400c0-.8.500-1.500 1.200-1.800l4-1.700V8.700C5.400 7.900 4.700 6.500 4.700 4.900 4.700 2.700 6 1.200 8 1.200z"/></svg>
<div class="c" style="left:486.50px;top:379.79px">Za</div>
<div class="badge" style="top:379.63px">Abgeschlossen</div>
<div class="c" style="left:1172.60px;top:379.79px;letter-spacing:-0.3px">03-05-2018</div>
<div class="btn" style="top:379.24px">Aktionen<svg viewBox="0 0 7 5" fill="none" stroke="#fff" stroke-width="1.100" stroke-linecap="round" stroke-linejoin="round"><path d="M.8.800 3.500 3.800 6.200.8"/></svg></div>
<div class="c" style="left:24.25px;width:60px;text-align:center;top:413.66px">12</div>
<svg class="ico" style="left:116.40px;top:416.31px;width:13.500px;height:13.500px" viewBox="0 0 14 14" fill="none" stroke="#5a8fd6" stroke-width="1" stroke-linecap="round" stroke-linejoin="round"><path d="M.6 1.200h1.800l2.200 8.300h6.600l1.900-5.800H3.600"/><path d="M6 3.600c0-1.700 1-2.600 2.200-2.600s2.200.9 2.200 2.600"/><circle cx="5.400" cy="12.100" r=".75" fill="#5a8fd6" stroke-width=".6"/><circle cx="10.300" cy="12.100" r=".75" fill="#5a8fd6" stroke-width=".6"/></svg>
<div class="c" style="left:133.05px;top:413.66px">al</div>
<svg class="ico" style="left:466.60px;top:416.11px;width:14.500px;height:14px" viewBox="0 0 16 16" fill="none" stroke="#5a8fd6" stroke-width="1.150" stroke-linecap="round" stroke-linejoin="round"><path d="M8 1.2c2 0 3.3 1.5 3.3 3.7 0 1.6-.7 3-1.7 3.8v1.2l4 1.7c.7.3 1.2 1 1.2 1.800v1.4H1.200v-1.400c0-.8.500-1.500 1.200-1.800l4-1.700V8.700C5.400 7.900 4.700 6.500 4.700 4.900 4.700 2.700 6 1.200 8 1.200z"/></svg>
<div class="c" style="left:486.50px;top:413.66px">We</div>
<div class="badge" style="top:413.50px">Abgeschlossen</div>
<div class="c" style="left:1172.60px;top:413.66px;letter-spacing:-0.3px">03-05-2018</div>
<div class="btn" style="top:413.11px">Aktionen<svg viewBox="0 0 7 5" fill="none" stroke="#fff" stroke-width="1.100" stroke-linecap="round" stroke-linejoin="round"><path d="M.8.800 3.500 3.800 6.200.8"/></svg></div>
<div class="c" style="left:24.25px;width:60px;text-align:center;top:447.52px">13</div>
<svg class="ico" style="left:116.40px;top:450.17px;width:13.500px;height:13.500px" viewBox="0 0 14 14" fill="none" stroke="#5a8fd6" stroke-width="1" stroke-linecap="round" stroke-linejoin="round"><path d="M.6 1.200h1.800l2.200 8.300h6.600l1.900-5.800H3.600"/><path d="M6 3.600c0-1.700 1-2.600 2.200-2.600s2.200.9 2.200 2.600"/><circle cx="5.400" cy="12.100" r=".75" fill="#5a8fd6" stroke-width=".6"/><circle cx="10.300" cy="12.100" r=".75" fill="#5a8fd6" stroke-width=".6"/></svg>
<div class="c" style="left:133.05px;top:447.52px">aN</div>
<svg class="ico" style="left:466.60px;top:449.97px;width:14.500px;height:14px" viewBox="0 0 16 16" fill="none" stroke="#5a8fd6" stroke-width="1.150" stroke-linecap="round" stroke-linejoin="round"><path d="M8 1.2c2 0 3.3 1.5 3.3 3.7 0 1.6-.7 3-1.7 3.8v1.2l4 1.7c.7.3 1.2 1 1.2 1.800v1.4H1.200v-1.400c0-.8.500-1.500 1.200-1.800l4-1.700V8.700C5.400 7.900 4.700 6.500 4.700 4.900 4.700 2.700 6 1.200 8 1.200z"/></svg>
<div class="c" style="left:486.50px;top:447.52px">We</div>
<div class="badge" style="top:447.37px">Abgeschlossen</div>
<div class="c" style="left:1172.60px;top:447.52px;letter-spacing:-0.3px">04-04-2018</div>
<div class="btn" style="top:446.97px">Aktionen<svg viewBox="0 0 7 5" fill="none" stroke="#fff" stroke-width="1.100" stroke-linecap="round" stroke-linejoin="round"><path d="M.8.800 3.500 3.800 6.200.8"/></svg></div>
<div class="c" style="left:24.25px;width:60px;text-align:center;top:481.39px">14</div>
<svg class="ico" style="left:116.40px;top:484.04px;width:13.500px;height:13.500px" viewBox="0 0 14 14" fill="none" stroke="#5a8fd6" stroke-width="1" stroke-linecap="round" stroke-linejoin="round"><path d="M.6 1.200h1.800l2.200 8.300h6.600l1.900-5.800H3.600"/><path d="M6 3.600c0-1.700 1-2.600 2.200-2.600s2.200.9 2.200 2.600"/><circle cx="5.400" cy="12.100" r=".75" fill="#5a8fd6" stroke-width=".6"/><circle cx="10.300" cy="12.100" r=".75" fill="#5a8fd6" stroke-width=".6"/></svg>
<div class="c" style="left:133.05px;top:481.39px">aN</div>
<svg class="ico" style="left:466.60px;top:483.84px;width:14.500px;height:14px" viewBox="0 0 16 16" fill="none" stroke="#5a8fd6" stroke-width="1.150" stroke-linecap="round" stroke-linejoin="round"><path d="M8 1.2c2 0 3.3 1.5 3.3 3.7 0 1.6-.7 3-1.7 3.8v1.2l4 1.7c.7.3 1.2 1 1.2 1.800v1.4H1.200v-1.400c0-.8.500-1.500 1.200-1.800l4-1.700V8.700C5.400 7.900 4.700 6.500 4.700 4.900 4.700 2.700 6 1.200 8 1.200z"/></svg>
<div class="c" style="left:486.50px;top:481.39px">Mit</div>
<div class="badge" style="top:481.24px">Abgeschlossen</div>
<div class="c" style="left:1172.60px;top:481.39px;letter-spacing:-0.3px">04-04-2018</div>
<div class="btn" style="top:480.84px">Aktionen<svg viewBox="0 0 7 5" fill="none" stroke="#fff" stroke-width="1.100" stroke-linecap="round" stroke-linejoin="round"><path d="M.8.800 3.500 3.800 6.200.8"/></svg></div>
<div class="c" style="left:24.25px;width:60px;text-align:center;top:515.26px">15</div>
<svg class="ico" style="left:116.40px;top:517.91px;width:13.500px;height:13.500px" viewBox="0 0 14 14" fill="none" stroke="#5a8fd6" stroke-width="1" stroke-linecap="round" stroke-linejoin="round"><path d="M.6 1.200h1.800l2.200 8.300h6.600l1.900-5.800H3.600"/><path d="M6 3.600c0-1.700 1-2.600 2.200-2.600s2.200.9 2.200 2.600"/><circle cx="5.400" cy="12.100" r=".75" fill="#5a8fd6" stroke-width=".6"/><circle cx="10.300" cy="12.100" r=".75" fill="#5a8fd6" stroke-width=".6"/></svg>
<div class="c" style="left:133.05px;top:515.26px">al</div>
<svg class="ico" style="left:466.60px;top:517.71px;width:14.500px;height:14px" viewBox="0 0 16 16" fill="none" stroke="#5a8fd6" stroke-width="1.150" stroke-linecap="round" stroke-linejoin="round"><path d="M8 1.2c2 0 3.3 1.5 3.3 3.7 0 1.6-.7 3-1.7 3.8v1.2l4 1.7c.7.3 1.2 1 1.2 1.800v1.4H1.200v-1.400c0-.8.500-1.500 1.200-1.800l4-1.700V8.700C5.400 7.900 4.700 6.500 4.700 4.900 4.700 2.700 6 1.200 8 1.200z"/></svg>
<div class="c" style="left:486.50px;top:515.26px">Mit</div>
<div class="badge" style="top:515.11px">Abgeschlossen</div>
<div class="c" style="left:1172.60px;top:515.26px;letter-spacing:-0.3px">04-04-2018</div>
<div class="btn" style="top:514.71px">Aktionen<svg viewBox="0 0 7 5" fill="none" stroke="#fff" stroke-width="1.100" stroke-linecap="round" stroke-linejoin="round"><path d="M.8.800 3.500 3.800 6.200.8"/></svg></div>
<div class="c" style="left:24.25px;width:60px;text-align:center;top:549.13px">16</div>
<svg class="ico" style="left:116.40px;top:551.78px;width:13.500px;height:13.500px" viewBox="0 0 14 14" fill="none" stroke="#5a8fd6" stroke-width="1" stroke-linecap="round" stroke-linejoin="round"><path d="M.6 1.200h1.800l2.200 8.300h6.600l1.900-5.800H3.600"/><path d="M6 3.600c0-1.700 1-2.600 2.200-2.600s2.200.9 2.200 2.600"/><circle cx="5.400" cy="12.100" r=".75" fill="#5a8fd6" stroke-width=".6"/><circle cx="10.300" cy="12.100" r=".75" fill="#5a8fd6" stroke-width=".6"/></svg>
<div class="c" style="left:133.05px;top:549.13px">aN</div>
<svg class="ico" style="left:466.60px;top:551.58px;width:14.500px;height:14px" viewBox="0 0 16 16" fill="none" stroke="#5a8fd6" stroke-width="1.150" stroke-linecap="round" stroke-linejoin="round"><path d="M8 1.2c2 0 3.3 1.5 3.3 3.7 0 1.6-.7 3-1.7 3.8v1.2l4 1.7c.7.3 1.2 1 1.2 1.800v1.4H1.200v-1.400c0-.8.500-1.500 1.200-1.800l4-1.700V8.700C5.400 7.900 4.700 6.500 4.700 4.900 4.700 2.700 6 1.200 8 1.200z"/></svg>
<div class="c" style="left:486.50px;top:549.13px">Za</div>
<div class="badge" style="top:548.98px">Abgeschlossen</div>
<div class="c" style="left:1172.60px;top:549.13px;letter-spacing:-0.3px">04-04-2018</div>
<div class="btn" style="top:548.58px">Aktionen<svg viewBox="0 0 7 5" fill="none" stroke="#fff" stroke-width="1.100" stroke-linecap="round" stroke-linejoin="round"><path d="M.8.800 3.500 3.800 6.200.8"/></svg></div>
<div class="c" style="left:24.25px;width:60px;text-align:center;top:583.00px">17</div>
<svg class="ico" style="left:116.40px;top:585.65px;width:13.500px;height:13.500px" viewBox="0 0 14 14" fill="none" stroke="#5a8fd6" stroke-width="1" stroke-linecap="round" stroke-linejoin="round"><path d="M.6 1.200h1.800l2.200 8.300h6.600l1.900-5.800H3.600"/><path d="M6 3.600c0-1.700 1-2.600 2.200-2.600s2.200.9 2.200 2.600"/><circle cx="5.400" cy="12.100" r=".75" fill="#5a8fd6" stroke-width=".6"/><circle cx="10.300" cy="12.100" r=".75" fill="#5a8fd6" stroke-width=".6"/></svg>
<div class="c" style="left:133.05px;top:583.00px">aN</div>
<svg class="ico" style="left:466.60px;top:585.45px;width:14.500px;height:14px" viewBox="0 0 16 16" fill="none" stroke="#5a8fd6" stroke-width="1.150" stroke-linecap="round" stroke-linejoin="round"><path d="M8 1.2c2 0 3.3 1.5 3.3 3.7 0 1.6-.7 3-1.7 3.8v1.2l4 1.7c.7.3 1.2 1 1.2 1.800v1.4H1.200v-1.400c0-.8.500-1.500 1.200-1.800l4-1.700V8.700C5.400 7.900 4.700 6.500 4.700 4.900 4.700 2.700 6 1.200 8 1.200z"/></svg>
<div class="c" style="left:486.50px;top:583.00px">We</div>
<div class="badge" style="top:582.85px">Abgeschlossen</div>
<div class="c" style="left:1172.60px;top:583.00px;letter-spacing:-0.3px">08-03-2018</div>
<div class="btn" style="top:582.45px">Aktionen<svg viewBox="0 0 7 5" fill="none" stroke="#fff" stroke-width="1.100" stroke-linecap="round" stroke-linejoin="round"><path d="M.8.800 3.500 3.800 6.200.8"/></svg></div>
<div class="c" style="left:24.25px;width:60px;text-align:center;top:616.87px">18</div>
<svg class="ico" style="left:116.40px;top:619.52px;width:13.500px;height:13.500px" viewBox="0 0 14 14" fill="none" stroke="#5a8fd6" stroke-width="1" stroke-linecap="round" stroke-linejoin="round"><path d="M.6 1.200h1.800l2.200 8.300h6.600l1.900-5.800H3.600"/><path d="M6 3.600c0-1.700 1-2.600 2.200-2.600s2.200.9 2.200 2.600"/><circle cx="5.400" cy="12.100" r=".75" fill="#5a8fd6" stroke-width=".6"/><circle cx="10.300" cy="12.100" r=".75" fill="#5a8fd6" stroke-width=".6"/></svg>
<div class="c" style="left:133.05px;top:616.87px">aN</div>
<svg class="ico" style="left:466.60px;top:619.32px;width:14.500px;height:14px" viewBox="0 0 16 16" fill="none" stroke="#5a8fd6" stroke-width="1.150" stroke-linecap="round" stroke-linejoin="round"><path d="M8 1.2c2 0 3.3 1.5 3.3 3.7 0 1.6-.7 3-1.7 3.8v1.2l4 1.7c.7.3 1.2 1 1.2 1.800v1.4H1.200v-1.400c0-.8.500-1.500 1.200-1.800l4-1.700V8.700C5.400 7.900 4.700 6.500 4.700 4.900 4.700 2.700 6 1.200 8 1.200z"/></svg>
<div class="c" style="left:486.50px;top:616.87px">Mit</div>
<div class="badge" style="top:616.72px">Abgeschlossen</div>
<div class="c" style="left:1172.60px;top:616.87px;letter-spacing:-0.3px">01-02-2018</div>
<div class="btn" style="top:616.32px">Aktionen<svg viewBox="0 0 7 5" fill="none" stroke="#fff" stroke-width="1.100" stroke-linecap="round" stroke-linejoin="round"><path d="M.8.800 3.500 3.800 6.200.8"/></svg></div>
<div class="c" style="left:24.25px;width:60px;text-align:center;top:650.74px">19</div>
<svg class="ico" style="left:116.40px;top:653.39px;width:13.500px;height:13.500px" viewBox="0 0 14 14" fill="none" stroke="#5a8fd6" stroke-width="1" stroke-linecap="round" stroke-linejoin="round"><path d="M.6 1.200h1.800l2.200 8.300h6.600l1.900-5.800H3.600"/><path d="M6 3.600c0-1.700 1-2.600 2.200-2.600s2.200.9 2.200 2.600"/><circle cx="5.400" cy="12.100" r=".75" fill="#5a8fd6" stroke-width=".6"/><circle cx="10.300" cy="12.100" r=".75" fill="#5a8fd6" stroke-width=".6"/></svg>
<div class="c" style="left:133.05px;top:650.74px">aN</div>
<svg class="ico" style="left:466.60px;top:653.19px;width:14.500px;height:14px" viewBox="0 0 16 16" fill="none" stroke="#5a8fd6" stroke-width="1.150" stroke-linecap="round" stroke-linejoin="round"><path d="M8 1.2c2 0 3.3 1.5 3.3 3.7 0 1.6-.7 3-1.7 3.8v1.2l4 1.7c.7.3 1.2 1 1.2 1.800v1.4H1.200v-1.400c0-.8.500-1.500 1.200-1.800l4-1.700V8.700C5.400 7.900 4.700 6.500 4.700 4.900 4.700 2.700 6 1.200 8 1.200z"/></svg>
<div class="c" style="left:486.50px;top:650.74px">Wei</div>
<div class="badge" style="top:650.59px">Abgeschlossen</div>
<div class="c" style="left:1172.60px;top:650.74px;letter-spacing:-0.3px">01-02-2018</div>
<div class="btn" style="top:650.19px">Aktionen<svg viewBox="0 0 7 5" fill="none" stroke="#fff" stroke-width="1.100" stroke-linecap="round" stroke-linejoin="round"><path d="M.8.800 3.500 3.800 6.200.8"/></svg></div>
</div>
<svg class="abs" style="left:0;top:0;width:1920px;height:949px;pointer-events:none" viewBox="0 0 1920 949"><defs><filter id="nz" x="0" y="0" width="100%" height="100%" color-interpolation-filters="sRGB"><feTurbulence type="fractalNoise" baseFrequency="0.95" numOctaves="2" seed="7" result="t"/><feColorMatrix in="t" type="matrix" values="1.5 .35 .35 0 -0.67  .35 1.5 .35 0 -0.653  .35 .35 1.5 0 -0.64  0 0 0 0 1" result="n"/><feComposite in="n" in2="SourceGraphic" operator="in"/></filter></defs>
<rect x="406.0" y="305.0" width="106.3" height="24.5" fill="#555" filter="url(#nz)"/>
<rect x="410.7" y="340.0" width="223.0" height="22.0" fill="#555" filter="url(#nz)"/>
<rect x="406.0" y="372.3" width="131.7" height="26.6" fill="#555" filter="url(#nz)"/>
<rect x="402.3" y="405.0" width="63.4" height="26.3" fill="#555" filter="url(#nz)"/>
<rect x="399.0" y="443.3" width="169.7" height="21.7" fill="#555" filter="url(#nz)"/>
<rect x="400.7" y="474.0" width="98.6" height="25.0" fill="#555" filter="url(#nz)"/>
<rect x="400.7" y="512.0" width="97.3" height="20.7" fill="#555" filter="url(#nz)"/>
<rect x="399.0" y="542.0" width="127.3" height="27.3" fill="#555" filter="url(#nz)"/>
<rect x="400.7" y="576.0" width="132.3" height="26.0" fill="#555" filter="url(#nz)"/>
<rect x="400.7" y="611.0" width="114.6" height="26.3" fill="#555" filter="url(#nz)"/>
<rect x="400.7" y="643.7" width="82.0" height="22.0" fill="#555" filter="url(#nz)"/>
<rect x="398.0" y="673.3" width="105.7" height="30.0" fill="#555" filter="url(#nz)"/>
<rect x="399.3" y="712.7" width="98.7" height="24.6" fill="#555" filter="url(#nz)"/>
<rect x="400.7" y="746.7" width="107.0" height="23.0" fill="#555" filter="url(#nz)"/>
<rect x="398.0" y="771.7" width="97.3" height="30.6" fill="#555" filter="url(#nz)"/>
<rect x="406.3" y="811.7" width="77.7" height="24.3" fill="#555" filter="url(#nz)"/>
<rect x="403.7" y="844.0" width="115.3" height="27.0" fill="#555" filter="url(#nz)"/>
<rect x="406.3" y="879.3" width="94.7" height="24.7" fill="#555" filter="url(#nz)"/>
<rect x="400.3" y="908.4" width="101.9" height="29.3" fill="#555" filter="url(#nz)"/>
<rect x="754.7" y="306.0" width="75.3" height="23.3" fill="#555" filter="url(#nz)"/>
<rect x="763.3" y="341.3" width="60.7" height="22.0" fill="#555" filter="url(#nz)"/>
<rect x="754.7" y="374.0" width="96.0" height="22.0" fill="#555" filter="url(#nz)"/>
<rect x="756.0" y="406.3" width="101.7" height="23.4" fill="#555" filter="url(#nz)"/>
<rect x="756.0" y="438.7" width="65.0" height="23.6" fill="#555" filter="url(#nz)"/>
<rect x="757.7" y="474.3" width="110.0" height="23.0" fill="#555" filter="url(#nz)"/>
<rect x="757.7" y="509.3" width="125.3" height="21.7" fill="#555" filter="url(#nz)"/>
<rect x="756.0" y="542.3" width="99.0" height="23.0" fill="#555" filter="url(#nz)"/>
<rect x="754.7" y="574.3" width="82.0" height="25.7" fill="#555" filter="url(#nz)"/>
<rect x="753.3" y="609.3" width="129.7" height="24.0" fill="#555" filter="url(#nz)"/>
<rect x="756.0" y="646.7" width="113.0" height="20.0" fill="#555" filter="url(#nz)"/>
<rect x="757.7" y="676.0" width="131.0" height="29.0" fill="#555" filter="url(#nz)"/>
<rect x="759.0" y="712.7" width="134.0" height="24.6" fill="#555" filter="url(#nz)"/>
<rect x="759.0" y="748.0" width="122.7" height="23.3" fill="#555" filter="url(#nz)"/>
<rect x="759.0" y="773.3" width="110.0" height="29.0" fill="#555" filter="url(#nz)"/>
<rect x="757.7" y="815.7" width="104.3" height="20.3" fill="#555" filter="url(#nz)"/>
<rect x="757.7" y="842.7" width="128.3" height="27.3" fill="#555" filter="url(#nz)"/>
<rect x="756.0" y="879.3" width="134.0" height="26.0" fill="#555" filter="url(#nz)"/>
<rect x="762.6" y="908.4" width="137.7" height="28.6" fill="#555" filter="url(#nz)"/>
</svg>
<div class="abs" style="left:1810.800px;top:327.300px;width:0;height:0;border-left:7px solid transparent;border-right:7px solid transparent;border-bottom:7.500px solid #fff;z-index:3"></div>
<div id="menu">
<svg class="mic" style="top:8.40px" viewBox="0 0 15 16" fill="none" stroke="#6e6e6e" stroke-width="1.100" stroke-linejoin="round" stroke-linecap="round"><path d="M4.200 3.800V1.600h5.600L13.500 5v8.200H9.800"/><path d="M9.600 1.800v3.400h3.600"/><path d="M1.200 3.800h5.200l3.200 3v8H1.200z" fill="#fff"/><path d="M6.400 3.800V7h3.200"/></svg>
<div class="mi" style="top:6.40px">Rechnung anzeigen</div>
<svg class="mic" style="top:40.40px" viewBox="0 0 15 16" fill="none" stroke="#6e6e6e" stroke-width="1.100" stroke-linejoin="round" stroke-linecap="round"><path d="M4.200 3.800V1.600h5.600L13.500 5v8.200H9.800"/><path d="M9.600 1.800v3.400h3.600"/><path d="M1.200 3.800h5.200l3.200 3v8H1.200z" fill="#fff"/><path d="M6.400 3.800V7h3.200"/></svg>
<div class="mi" style="top:38.40px">Cancel</div>
<svg class="mic" style="top:72.20px" viewBox="0 0 15 16" fill="none" stroke="#6e6e6e" stroke-width="1.100" stroke-linejoin="round" stroke-linecap="round"><path d="M4.200 3.800V1.600h5.600L13.500 5v8.200H9.800"/><path d="M9.600 1.800v3.400h3.600"/><path d="M1.200 3.800h5.200l3.200 3v8H1.200z" fill="#fff"/><path d="M6.400 3.800V7h3.200"/></svg>
<div class="mi" style="top:70.20px">Rechnung archivieren</div>
</div>
</div></body></html>
